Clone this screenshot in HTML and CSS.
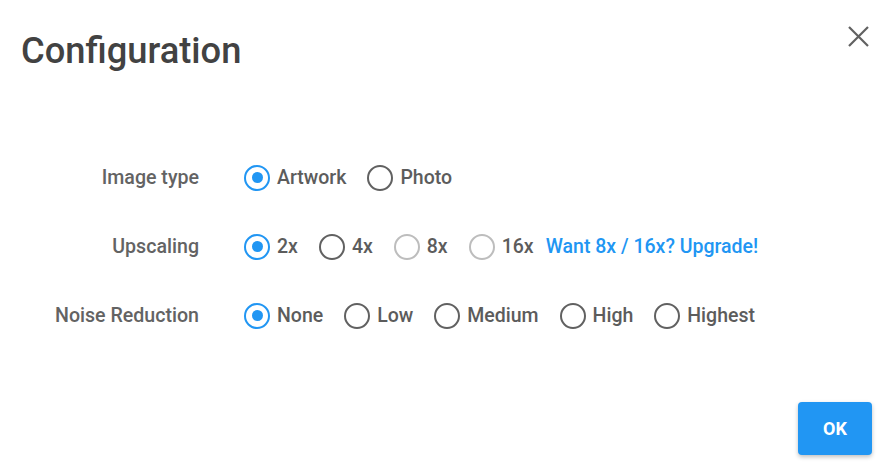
FILE: index.html
```html
<!DOCTYPE html>
<html>
<head>
<meta charset="utf-8">
<link rel="stylesheet" href="styles.css">
</head>
<body>
<div class="dialog">
  <div class="header">
    <h1 class="title">Configuration</h1>
    <button class="close" aria-label="Close">
      <svg width="21" height="21" viewBox="0 0 21 21"><path d="M1 1L20 20M20 1L1 20" stroke="#616161" stroke-width="2.2" fill="none"/></svg>
    </button>
  </div>
  <div class="form">
    <div class="label">Image type</div>
    <div class="options">
      <span class="opt"><span class="radio checked"></span>Artwork</span>
      <span class="opt"><span class="radio"></span>Photo</span>
    </div>
    <div class="label">Upscaling</div>
    <div class="options">
      <span class="opt"><span class="radio checked"></span>2x</span>
      <span class="opt"><span class="radio"></span>4x</span>
      <span class="opt"><span class="radio disabled"></span>8x</span>
      <span class="opt short"><span class="radio disabled"></span>16x</span>
      <a class="upgrade">Want 8x / 16x? Upgrade!</a>
    </div>
    <div class="label">Noise Reduction</div>
    <div class="options">
      <span class="opt"><span class="radio checked"></span>None</span>
      <span class="opt"><span class="radio"></span>Low</span>
      <span class="opt"><span class="radio"></span>Medium</span>
      <span class="opt"><span class="radio"></span>High</span>
      <span class="opt"><span class="radio"></span>Highest</span>
    </div>
  </div>
  <div class="footer">
    <button class="ok">OK</button>
  </div>
</div>
</body>
</html>
```
FILE: styles.css
```css
html, body {
  margin: 0;
  padding: 0;
  background: #fff;
}
body {
  font-family: Roboto, "Liberation Sans", sans-serif;
}
.dialog {
  width: 888px;
  height: 474px;
  box-sizing: border-box;
  padding: 0 16px 19px 21px;
  display: flex;
  flex-direction: column;
}
.header {
  display: flex;
  align-items: flex-start;
  justify-content: space-between;
}
.title {
  margin: 29px 0 0 0;
  font-size: 36.3px;
  line-height: 44px;
  font-weight: 500;
  color: #424242;
}
.close {
  margin: 26px 3px 0 0;
  padding: 0;
  border: 0;
  background: none;
  width: 21px;
  height: 21px;
  display: block;
}
.close svg { display: block; }
.form {
  margin-top: 70px;
  display: grid;
  grid-template-columns: 178px 1fr;
  grid-auto-rows: 69px;
  column-gap: 45px;
  align-items: center;
}
.label {
  text-align: right;
  font-size: 19.6px;
  font-weight: 500;
  color: #636363;
}
.options {
  display: flex;
  align-items: center;
  font-size: 19.5px;
  font-weight: 500;
  color: #5c5c5c;
}
.opt {
  display: flex;
  align-items: center;
  margin-right: 21px;
}
.opt.short { margin-right: 12px; }
.radio {
  width: 26px;
  height: 26px;
  box-sizing: border-box;
  border: 2.6px solid #616161;
  border-radius: 50%;
  margin-right: 7px;
  display: flex;
  align-items: center;
  justify-content: center;
}
.radio.checked { border-color: #2196f3; }
.radio.checked::after {
  content: "";
  width: 11px;
  height: 11px;
  border-radius: 50%;
  background: #2196f3;
}
.radio.disabled { border-color: #bdbdbd; }
.upgrade {
  color: #2196f3;
  font-weight: 500;
  cursor: pointer;
}
.footer {
  margin-top: auto;
  display: flex;
  justify-content: flex-end;
}
.ok {
  width: 74px;
  height: 53px;
  border: 0;
  border-radius: 4px;
  background: #2196f3;
  color: #fff;
  font-family: Roboto, "Liberation Sans", sans-serif;
  font-size: 18px;
  font-weight: 700;
  box-shadow: 0 2px 4px rgba(0,0,0,0.25);
}
```
